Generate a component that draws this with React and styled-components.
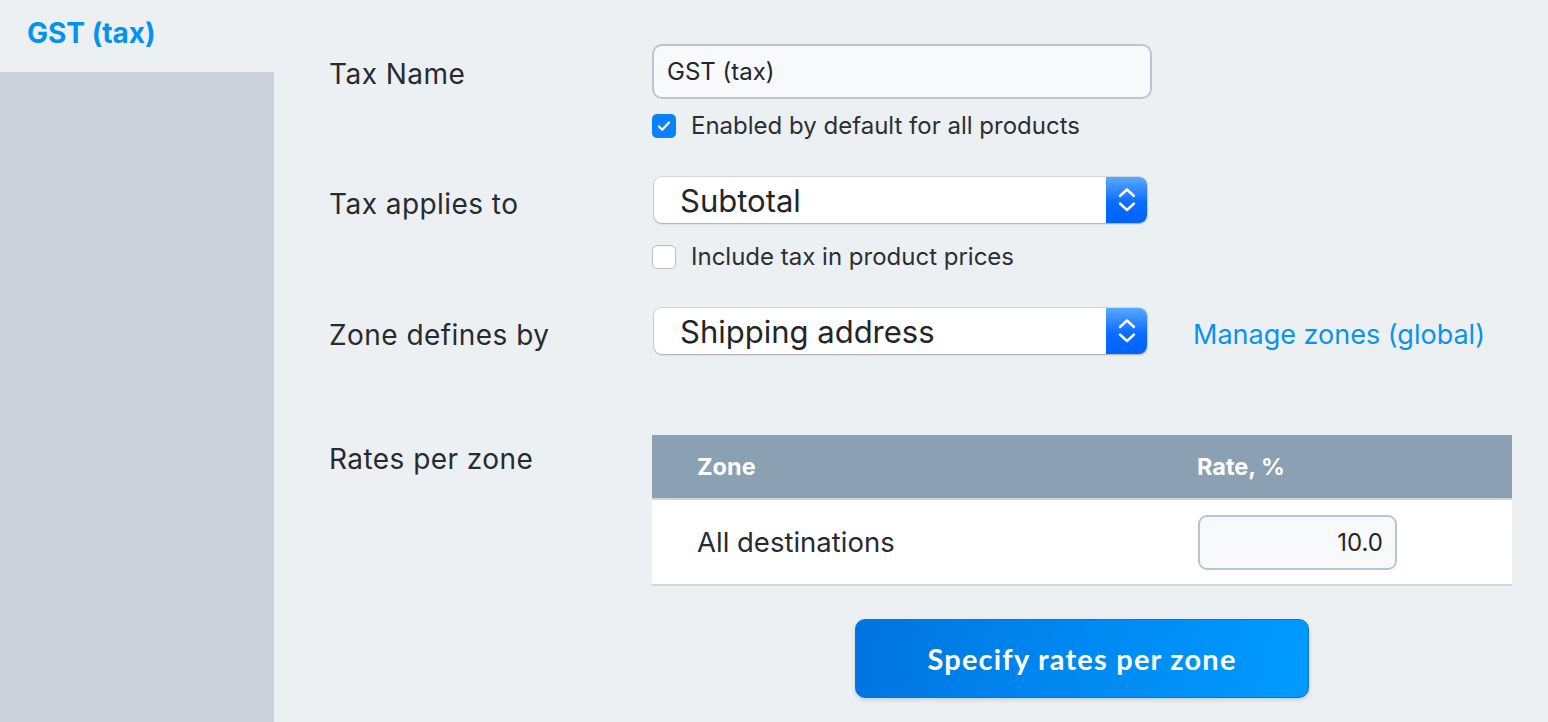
import styled, { createGlobalStyle } from 'styled-components';

const GlobalStyle = createGlobalStyle`
  html, body {
    margin: 0;
    padding: 0;
    background: #edf0f3;
    font-family: Inter, "Liberation Sans", sans-serif;
    color: #262b31;
  }
  * { box-sizing: border-box; }
`;

const Page = styled.div`
  display: flex;
  width: 1548px;
  height: 722px;
  overflow: hidden;
`;

const Sidebar = styled.aside`
  width: 274px;
  flex-shrink: 0;
  display: flex;
  flex-direction: column;
`;

const SideTab = styled.div`
  height: 72px;
  padding: 16px 0 0 27px;
  font-size: 28px;
  font-weight: 700;
  color: #0293ee;
  background: #edf0f3;
`;

const SideRest = styled.div`
  flex: 1;
  background: #cbd2dc;
`;

const Main = styled.main`
  flex: 1;
  padding: 44px 0 0 55px;
  display: flex;
  flex-direction: column;
`;

const Row = styled.div`
  display: grid;
  grid-template-columns: 323px 1fr;
  margin-bottom: ${({ gap }) => gap || 0}px;
`;

const Label = styled.div`
  font-size: 28px;
  line-height: 32px;
  letter-spacing: 0.45px;
  padding-top: ${({ offset }) => offset}px;
  color: #262b31;
`;

const Field = styled.div`
  display: flex;
  flex-direction: column;
  align-items: flex-start;
`;

const TextInput = styled.div`
  width: 500px;
  height: 55px;
  border: 2px solid #bac5d0;
  border-radius: 10px;
  background: #f7f9fb;
  padding-left: 13px;
  display: flex;
  align-items: center;
  font-size: 24px;
  color: #22262b;
`;

const CheckRow = styled.label`
  display: flex;
  align-items: center;
  gap: 15px;
  margin-top: ${({ top }) => top}px;
  font-size: 24px;
  line-height: 24px;
  color: #2a2f35;
`;

const Box = styled.span`
  width: 24px;
  height: 24px;
  border-radius: 5px;
  display: flex;
  align-items: center;
  justify-content: center;
  background: ${({ checked }) => (checked ? '#0a82ff' : '#ffffff')};
  border: ${({ checked }) => (checked ? 'none' : '1px solid #b9bec5')};
  box-shadow: ${({ checked }) => (checked ? 'none' : 'inset 0 1px 1px rgba(0,0,0,0.06)')};
`;

const SelectLine = styled.div`
  display: flex;
  align-items: center;
`;

const Select = styled.div`
  width: 493px;
  height: 46px;
  margin-left: 2px;
  border-radius: 8px;
  background: #ffffff;
  box-shadow: 0 0 0 1px rgba(0, 0, 0, 0.09), 0 1px 2px rgba(0, 0, 0, 0.22);
  display: flex;
  align-items: center;
  justify-content: space-between;
  font-size: 31px;
  color: #22262b;
  overflow: hidden;
`;

const SelectText = styled.span`
  padding-left: 26px;
`;

const Stepper = styled.span`
  width: 41px;
  height: 100%;
  background: linear-gradient(#5aa8ff, #0a6dff 55%, #0062ff);
  display: flex;
  align-items: center;
  justify-content: center;
`;

const Link = styled.a`
  margin-left: 46px;
  margin-top: 6px;
  font-size: 27px;
  color: #0a93ee;
  text-decoration: none;
`;

const Table = styled.div`
  width: 860px;
  display: flex;
  flex-direction: column;
`;

const TableRow = styled.div`
  display: grid;
  grid-template-columns: 500px 1fr;
  align-items: center;
  height: ${({ head }) => (head ? 65 : 86)}px;
  padding-left: 45px;
  background: ${({ head }) => (head ? '#8ba0b3' : '#ffffff')};
  border-bottom: ${({ head }) => (head ? '2px solid #cbd3dc' : '2px solid #cfd7df')};
  color: ${({ head }) => (head ? '#ffffff' : '#262b31')};
  font-size: ${({ head }) => (head ? 23.5 : 27.5)}px;
  font-weight: ${({ head }) => (head ? 700 : 400)};
`;

const RateInput = styled.div`
  width: 199px;
  height: 55px;
  margin-left: 1px;
  border: 2px solid #bac5d0;
  border-radius: 9px;
  background: #f7f9fb;
  display: flex;
  align-items: center;
  justify-content: flex-end;
  padding-right: 12px;
  font-size: 24px;
  color: #22262b;
`;

const ButtonWrap = styled.div`
  display: flex;
  justify-content: center;
  margin-top: 33px;
`;

const Button = styled.button`
  width: 454px;
  height: 79px;
  border: 1px solid #0577dc;
  border-radius: 10px;
  background: linear-gradient(100deg, #0074e0 0%, #0089f2 50%, #009bff 100%);
  color: #ffffff;
  font-family: Lato, "Open Sans", sans-serif;
  font-size: 29px;
  font-weight: 700;
  letter-spacing: 1.2px;
  box-shadow: 0 2px 4px rgba(0, 60, 130, 0.18);
  cursor: pointer;
`;

function Check({ checked, children, top }) {
  return (
    <CheckRow top={top}>
      <Box checked={checked}>
        {checked && (
          <svg width="16" height="16" viewBox="0 0 16 16">
            <path d="M3 8.5l3.2 3.3L13 4.5" fill="none" stroke="#fff" strokeWidth="2.2" strokeLinecap="round" strokeLinejoin="round" />
          </svg>
        )}
      </Box>
      {children}
    </CheckRow>
  );
}

function Chevrons() {
  return (
    <svg width="20" height="28" viewBox="0 0 20 28">
      <path d="M3 10l7-6.5 7 6.5M3 17.5l7 6.5 7-6.5" fill="none" stroke="#fff" strokeWidth="2.4" strokeLinecap="round" strokeLinejoin="round" />
    </svg>
  );
}

function Dropdown({ value }) {
  return (
    <Select>
      <SelectText>{value}</SelectText>
      <Stepper>
        <Chevrons />
      </Stepper>
    </Select>
  );
}

export default function App() {
  return (
    <Page>
      <GlobalStyle />
      <Sidebar>
        <SideTab>GST (tax)</SideTab>
        <SideRest />
      </Sidebar>
      <Main>
        <Row gap={39}>
          <Label offset={14}>Tax Name</Label>
          <Field>
            <TextInput>GST (tax)</TextInput>
            <Check checked top={15}>Enabled by default for all products</Check>
          </Field>
        </Row>
        <Row gap={39}>
          <Label offset={11}>Tax applies to</Label>
          <Field>
            <Dropdown value="Subtotal" />
            <Check top={22}>Include tax in product prices</Check>
          </Field>
        </Row>
        <Row gap={81}>
          <Label offset={11}>Zone defines by</Label>
          <SelectLine>
            <Dropdown value="Shipping address" />
            <Link href="#">Manage zones (global)</Link>
          </SelectLine>
        </Row>
        <Row>
          <Label offset={8}>Rates per zone</Label>
          <Field>
            <Table>
              <TableRow head>
                <span>Zone</span>
                <span>Rate, %</span>
              </TableRow>
              <TableRow>
                <span>All destinations</span>
                <RateInput>10.0</RateInput>
              </TableRow>
            </Table>
            <Table>
              <ButtonWrap>
                <Button>Specify rates per zone</Button>
              </ButtonWrap>
            </Table>
          </Field>
        </Row>
      </Main>
    </Page>
  );
}
